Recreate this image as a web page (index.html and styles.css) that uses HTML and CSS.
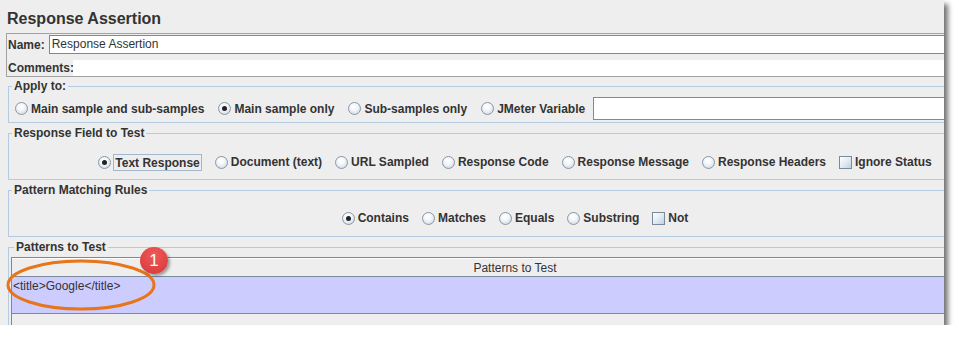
FILE: index.html
```html
<!DOCTYPE html>
<html>
<head>
<meta charset="utf-8">
<link rel="stylesheet" href="styles.css">
</head>
<body>
<div class="shot">
  <div class="content">
    <h1 class="title">Response Assertion</h1>
    <div class="namebox">
      <div class="name-row">
        <span class="lbl">Name:</span>
        <div class="field">Response Assertion</div>
      </div>
      <div class="comments-row">
        <span class="lbl">Comments:</span>
        <div class="comments"></div>
      </div>
    </div>

    <fieldset class="group">
      <legend>Apply to:</legend>
      <div class="opts opts-apply">
        <span class="opt"><span class="radio"></span><span class="txt">Main sample and sub-samples</span></span>
        <span class="opt"><span class="radio on"></span><span class="txt">Main sample only</span></span>
        <span class="opt"><span class="radio"></span><span class="txt">Sub-samples only</span></span>
        <span class="opt"><span class="radio"></span><span class="txt">JMeter Variable</span></span>
        <div class="varfield"></div>
      </div>
    </fieldset>

    <fieldset class="group">
      <legend>Response Field to Test</legend>
      <div class="opts opts-center opts-field">
        <span class="opt"><span class="radio on"></span><span class="txt focus">Text Response</span></span>
        <span class="opt"><span class="radio"></span><span class="txt">Document (text)</span></span>
        <span class="opt"><span class="radio"></span><span class="txt">URL Sampled</span></span>
        <span class="opt"><span class="radio"></span><span class="txt">Response Code</span></span>
        <span class="opt"><span class="radio"></span><span class="txt">Response Message</span></span>
        <span class="opt"><span class="radio"></span><span class="txt">Response Headers</span></span>
        <span class="opt"><span class="check"></span><span class="txt">Ignore Status</span></span>
      </div>
    </fieldset>

    <fieldset class="group">
      <legend>Pattern Matching Rules</legend>
      <div class="opts opts-center opts-rules">
        <span class="opt"><span class="radio on"></span><span class="txt">Contains</span></span>
        <span class="opt"><span class="radio"></span><span class="txt">Matches</span></span>
        <span class="opt"><span class="radio"></span><span class="txt">Equals</span></span>
        <span class="opt"><span class="radio"></span><span class="txt">Substring</span></span>
        <span class="opt"><span class="check"></span><span class="txt">Not</span></span>
      </div>
    </fieldset>

    <fieldset class="group group-table">
      <legend>Patterns to Test</legend>
      <div class="tablewrap">
        <div class="thead">Patterns to Test</div>
        <div class="trow">&lt;title&gt;Google&lt;/title&gt;</div>
        <div class="tfill"></div>
      </div>
    </fieldset>
  </div>

  <svg class="ring" width="156" height="56" viewBox="0 0 156 56">
    <ellipse cx="77" cy="27" rx="73" ry="24" fill="none" stroke="#e8751a" stroke-width="3"/>
  </svg>
  <div class="badge">1</div>
</div>
</body>
</html>
```

FILE: styles.css
```css
html, body {
  margin: 0;
  padding: 0;
  background: #ffffff;
}

.shot {
  position: relative;
  width: 944px;
  height: 325px;
  background: #eeeeee;
  overflow: hidden;
  box-shadow: 4px 4px 5px rgba(0, 0, 0, 0.55);
  font-family: "Liberation Sans", Arial, sans-serif;
  font-size: 12px;
  color: #333333;
}

.content {
  width: 1030px;
}

.title {
  margin: 0 0 5px 0;
  padding: 10px 0 0 7px;
  font-size: 16px;
  line-height: 18px;
  font-weight: bold;
  color: #333333;
}

.namebox {
  margin-left: 6px;
  width: 1020px;
  border: 1px solid #a2a2a2;
  border-right: none;
  padding: 1px 0 0 1px;
  box-sizing: border-box;
}

.lbl {
  font-weight: bold;
  line-height: 14px;
}

.name-row {
  display: flex;
  align-items: center;
  height: 19px;
}

.field {
  margin-left: 4px;
  flex: 1;
  height: 19px;
  box-sizing: border-box;
  border: 1px solid #7a8a99;
  border-right: none;
  background: #ffffff;
  padding-left: 2px;
  line-height: 17px;
}

.comments-row {
  display: flex;
  align-items: center;
  height: 16px;
  margin-top: 6px;
}

.comments {
  flex: 1;
  height: 16px;
  background: #ffffff;
  margin-left: -1px;
}

.group {
  margin: 3px 0 0 8px;
  width: 1014px;
  min-width: 0;
  box-sizing: border-box;
  border: 1px solid #b5cbe1;
  padding: 0;
}

.group:first-of-type {
  margin-top: 2px;
}

.group legend {
  margin-left: 3px;
  padding: 0 2px;
  font-weight: bold;
  line-height: 14px;
}

.opts {
  display: flex;
  align-items: center;
  gap: 14px;
}

.opts-apply {
  padding: 4px 0 2px 6px;
  height: 23px;
}

.opts-center {
  justify-content: center;
  height: 20px;
  gap: 13px;
}

.opts-field {
  padding: 12px 0 7px 0;
}

.opts-rules {
  padding: 11px 0 8px 0;
}

.opt {
  display: flex;
  align-items: center;
  gap: 3px;
}

.txt {
  font-weight: bold;
  line-height: 14px;
  white-space: nowrap;
}

.focus {
  border: 1px solid #a3b8cc;
  padding: 1px 1px 0 1px;
  margin-left: -1px;
}

.radio {
  width: 13px;
  height: 13px;
  box-sizing: border-box;
  border-radius: 50%;
  border: 1px solid #8a97a4;
  background: radial-gradient(circle at 45% 35%, #ffffff 0%, #f5f8fb 35%, #d3dde7 80%, #bccbd9 100%);
  display: flex;
  align-items: center;
  justify-content: center;
}

.radio.on::after {
  content: "";
  width: 5px;
  height: 5px;
  border-radius: 50%;
  background: #222222;
}

.check {
  width: 13px;
  height: 13px;
  box-sizing: border-box;
  border: 1px solid #7a8a99;
  background: linear-gradient(135deg, #ffffff 0%, #e6edf4 45%, #c3d1de 100%);
}

.varfield {
  margin-left: -6px;
  flex: 1;
  height: 23px;
  box-sizing: border-box;
  border: 1px solid #7a8a99;
  border-right: none;
  background: #ffffff;
}

.group-table {
  padding: 3px 2px 0 2px;
}

.tablewrap {
  border: 1px solid #7a8a99;
  border-bottom: none;
}

.thead {
  height: 19px;
  box-sizing: border-box;
  border-top: 1px solid #ffffff;
  border-bottom: 1px solid #7a8a99;
  background: #eeeeee;
  text-align: center;
  line-height: 18px;
}

.trow {
  height: 37px;
  box-sizing: border-box;
  background: #ccccff;
  border-bottom: 1px solid #7a8a99;
  padding: 2px 0 0 1px;
  line-height: 14px;
}

.tfill {
  height: 30px;
  background: #eeeeee;
}

.ring {
  position: absolute;
  left: 4px;
  top: 258px;
}

.badge {
  position: absolute;
  left: 140px;
  top: 247px;
  width: 28px;
  height: 27px;
  border-radius: 50%;
  background: radial-gradient(circle at 50% 30%, #ef5a58 0%, #e04444 60%, #cf3a3a 100%);
  box-shadow: 2px 2px 3px rgba(0, 0, 0, 0.35);
  color: #ffffff;
  font-family: "Liberation Sans", Arial, sans-serif;
  font-size: 17px;
  line-height: 27px;
  text-align: center;
}
```
